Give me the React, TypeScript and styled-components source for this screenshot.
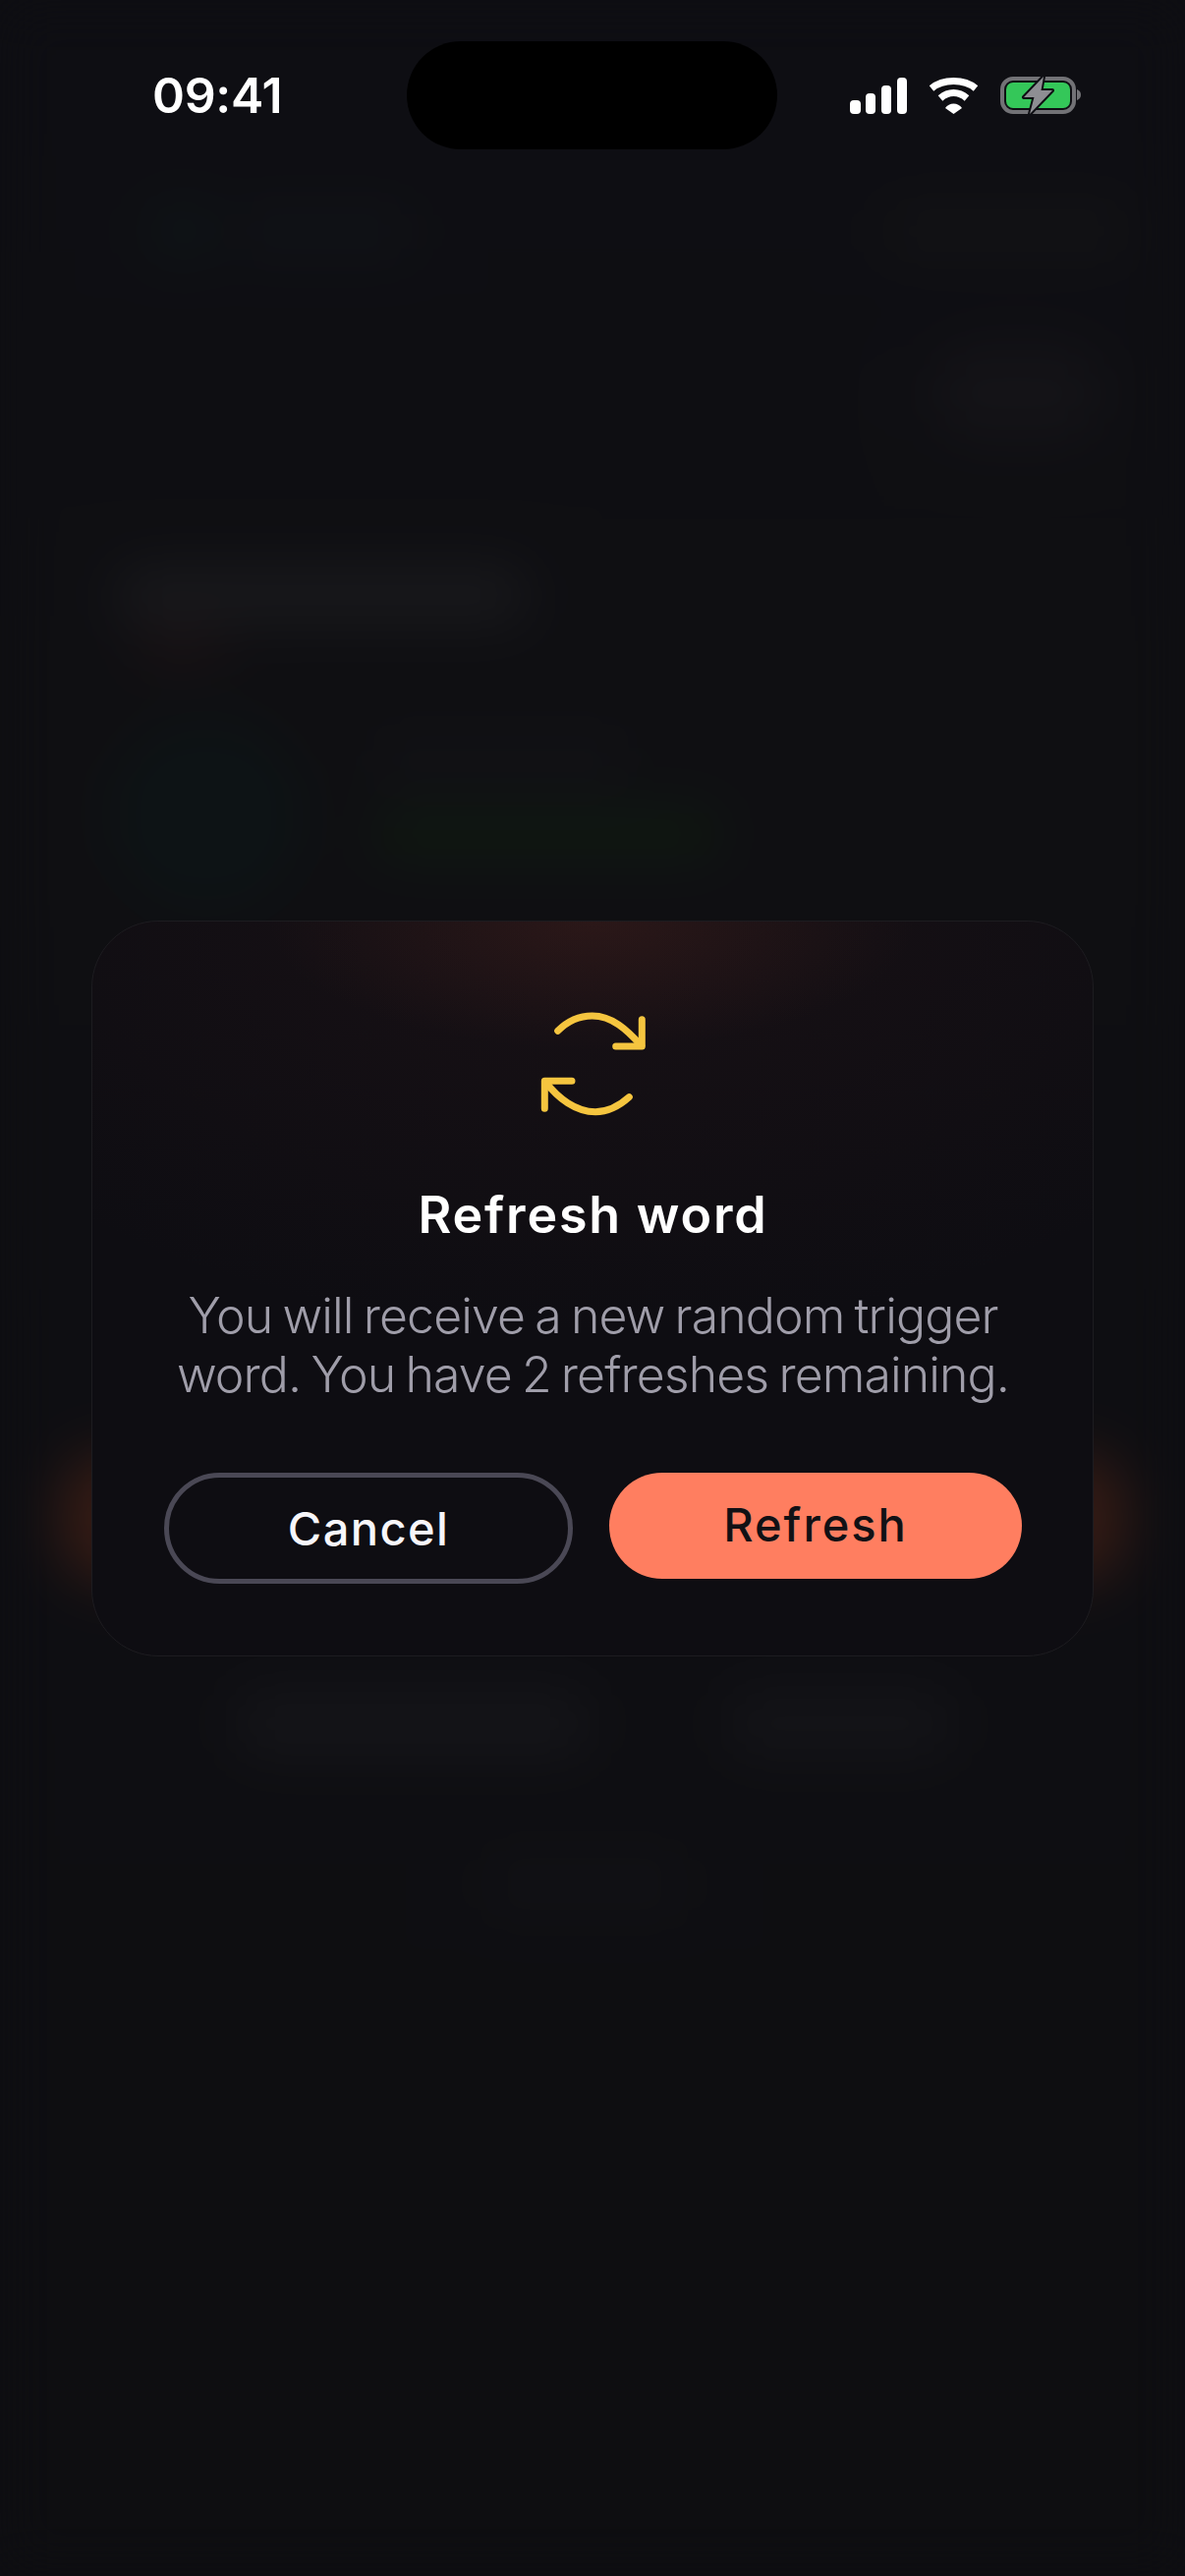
import React, {FC} from 'react';
import styled, {createGlobalStyle} from 'styled-components';

const GlobalStyle = createGlobalStyle`
  html, body {
    margin: 0;
    padding: 0;
    background: #0e0e12;
  }
  * {
    box-sizing: border-box;
  }
`;

const Page = styled.div`
  display: grid;
  width: 1206px;
  height: 2622px;
  overflow: hidden;
  background: #0e0e12;
  font-family: Inter, "Liberation Sans", sans-serif;
`;

/* the page behind the dialog, out of focus */
const Backdrop = styled.div`
  grid-area: 1 / 1;
  display: flex;
  flex-direction: column;
  align-items: flex-start;
  padding-top: 205px;
  background: linear-gradient(180deg, #0e0e13 0%, #0f0f12 30%, #0e0e12 60%, #0e0e11 100%);
  filter: blur(28px);
`;

const Foreground = styled.div`
  grid-area: 1 / 1;
  position: relative;
  z-index: 1;
  display: flex;
  flex-direction: column;
  align-items: center;
`;

const HeaderRow = styled.div`
  display: flex;
  align-items: center;
  align-self: stretch;
  gap: 20px;
  padding: 0 56px 0 150px;
`;

const HeaderDot = styled.div`
  width: 70px;
  height: 60px;
  border-radius: 30px;
  background: #0e1517;
`;

const HeaderTitle = styled.div`
  width: 180px;
  height: 45px;
  border-radius: 20px;
  background: #101317;
`;

const HeaderAction = styled.div`
  width: 250px;
  height: 50px;
  margin-left: auto;
  border-radius: 20px;
  background: #131315;
`;

const RoundAction = styled.div`
  align-self: flex-end;
  width: 170px;
  height: 100px;
  margin: 85px 86px 0 0;
  border-radius: 40px;
  background: #141317;
`;

const HeadingBlur = styled.div`
  width: 415px;
  height: 50px;
  margin: 130px 0 0 120px;
  border-radius: 20px;
  background: #1a1a1d;
`;

const SubheadBlur = styled.div`
  width: 90px;
  height: 30px;
  margin: 15px 0 0 140px;
  border-radius: 14px;
  background: #1c1214;
`;

const StatsRow = styled.div`
  display: flex;
  gap: 70px;
  margin: 55px 0 0 110px;
`;

const AvatarBlur = styled.div`
  width: 200px;
  height: 200px;
  border-radius: 50%;
  background: #0d1315;
`;

const StatsText = styled.div`
  display: flex;
  flex-direction: column;
  gap: 30px;
  padding-top: 25px;
`;

const LabelBlur = styled.div`
  width: 260px;
  height: 40px;
  border-radius: 20px;
  background: #121216;
`;

const ProgressBlur = styled.div`
  width: 355px;
  height: 48px;
  border-radius: 24px;
  background: #0f1911;
`;

const OrangeGlow = styled.div`
  width: 1086px;
  height: 130px;
  margin: 550px 0 0 60px;
  border-radius: 50px;
  background: #351b14;
`;

const RowBlurs = styled.div`
  display: flex;
  gap: 140px;
  margin: 112px 0 0 240px;
`;

const RowBlurLeft = styled.div`
  width: 360px;
  height: 65px;
  border-radius: 24px;
  background: #151519;
`;

const RowBlurRight = styled.div`
  width: 230px;
  height: 65px;
  border-radius: 24px;
  background: #141418;
`;

const FootBlur = styled.div`
  width: 210px;
  height: 55px;
  margin: 103px 0 0 490px;
  border-radius: 24px;
  background: #111115;
`;

const StatusBar = styled.header`
  display: grid;
  grid-template-columns: 259px 377px auto;
  align-items: center;
  align-self: stretch;
  height: 110px;
  margin-top: 42px;
  padding-left: 155px;
`;

const Time = styled.div`
  color: #fff;
  font-size: 50px;
  font-weight: 600;
  letter-spacing: -0.3px;
  white-space: nowrap;
`;

const Island = styled.div`
  height: 110px;
  border-radius: 55px;
  background: #000;
`;

const StatusIcons = styled.div`
  display: flex;
  align-items: center;
  gap: 22px;
  margin-left: 74px;
`;

const Modal = styled.section`
  display: flex;
  flex-direction: column;
  align-items: center;
  width: 1020px;
  height: 749px;
  margin-top: 785px;
  padding: 88px 72px 0 73px;
  border: 1px solid #1d1c20;
  border-radius: 68px;
  background:
    radial-gradient(ellipse 330px 130px at 50% 0%, rgba(120, 52, 38, 0.2), rgba(120, 52, 38, 0) 100%),
    radial-gradient(ellipse 760px 420px at 50% 0%, rgba(90, 40, 40, 0.13), rgba(90, 40, 40, 0) 100%),
    #0e0d12;
`;

const Title = styled.h2`
  margin: 67px 0 0;
  color: #fff;
  font-size: 52px;
  line-height: 60px;
  font-weight: 600;
  letter-spacing: 1.8px;
  white-space: nowrap;
`;

const Body = styled.p`
  margin: 42px -20px 0;
  color: #9f9da9;
  font-size: 50px;
  line-height: 60px;
  font-weight: 300;
  letter-spacing: -0.9px;
  word-spacing: -3px;
  text-align: center;
  white-space: nowrap;
`;

const Actions = styled.div`
  display: flex;
  align-items: flex-start;
  justify-content: space-between;
  align-self: stretch;
  margin-top: 70px;
`;

const CancelButton = styled.button`
  width: 416px;
  height: 113px;
  border: 5px solid #4a4855;
  border-radius: 57px;
  background: transparent;
  color: #f7f6fa;
  font: 500 47px Inter, "Liberation Sans", sans-serif;
  letter-spacing: 1.4px;
`;

const RefreshButton = styled.button`
  width: 420px;
  height: 108px;
  padding: 0 0 4px;
  border: none;
  border-radius: 54px;
  background: #ff7e60;
  color: #121115;
  font: 500 47px Inter, "Liberation Sans", sans-serif;
  letter-spacing: 2px;
`;

const SignalIcon: FC = () => (
  <svg width="58" height="37" viewBox="0 0 58 37" fill="#fff">
    <rect x="0" y="23" width="11" height="14" rx="4" />
    <rect x="16" y="16" width="10" height="21" rx="4" />
    <rect x="32" y="8" width="10" height="29" rx="4" />
    <rect x="48" y="0" width="10" height="37" rx="4" />
  </svg>
);

const WifiIcon: FC = () => (
  <svg width="51" height="37" viewBox="0 0 51 37" fill="none">
    <path d="M3 11C9 6 17 3.6 25.5 3.6S42 6 48 11" stroke="#fff" strokeWidth="7" />
    <path d="M12 21C16 17.5 20.5 15.6 25.5 15.6S35 17.5 39 21" stroke="#fff" strokeWidth="7" />
    <path d="M17 31C19 28 22 26.4 25.5 26.4S32 28 34 31L25.5 37Z" fill="#fff" />
  </svg>
);

const BatteryIcon: FC = () => (
  <svg width="82" height="40" viewBox="0 0 82 40" fill="none">
    <rect x="2" y="3" width="73" height="34" rx="11" stroke="#727276" strokeWidth="4" />
    <rect x="6" y="7" width="65" height="26" rx="7" fill="#34c759" />
    <path d="M78 14C81 15 82 17 82 19.5S81 24 78 25Z" fill="#727276" />
    <path
      d="M44 1L24 22H34.5L30 39L53 15H41.5Z"
      fill="#8e8e93"
      stroke="#0e0e13"
      strokeWidth="4"
      strokeLinejoin="round"
      paintOrder="stroke"
    />
  </svg>
);

const RefreshIcon: FC = () => (
  <svg width="116" height="114" viewBox="0 0 116 114" fill="none" stroke="#f5c53f" strokeWidth="7" strokeLinecap="round" strokeLinejoin="round">
    <path d="M21.7 23.3C33 12 45 8 56.7 8C77 8 92 22 106.7 38.3" />
    <path d="M107.3 11.7V39H80.7" />
    <path d="M94.3 90.7C84 100 72 105.7 60 105.7C40 105.7 22 92 9 75" />
    <path d="M8.3 102.3V74.3H36" />
  </svg>
);

const App: FC = () => (
  <>
    <GlobalStyle />
    <Page>
      <Backdrop>
        <HeaderRow>
          <HeaderDot />
          <HeaderTitle />
          <HeaderAction />
        </HeaderRow>
        <RoundAction />
        <HeadingBlur />
        <SubheadBlur />
        <StatsRow>
          <AvatarBlur />
          <StatsText>
            <LabelBlur />
            <ProgressBlur />
          </StatsText>
        </StatsRow>
        <OrangeGlow />
        <RowBlurs>
          <RowBlurLeft />
          <RowBlurRight />
        </RowBlurs>
        <FootBlur />
      </Backdrop>
      <Foreground>
        <StatusBar>
          <Time>09:41</Time>
          <Island />
          <StatusIcons>
            <SignalIcon />
            <WifiIcon />
            <BatteryIcon />
          </StatusIcons>
        </StatusBar>
        <Modal>
          <RefreshIcon />
          <Title>Refresh word</Title>
          <Body>
            You will receive a new random trigger
            <br />
            word. You have 2 refreshes remaining.
          </Body>
          <Actions>
            <CancelButton>Cancel</CancelButton>
            <RefreshButton>Refresh</RefreshButton>
          </Actions>
        </Modal>
      </Foreground>
    </Page>
  </>
);

export default App;
